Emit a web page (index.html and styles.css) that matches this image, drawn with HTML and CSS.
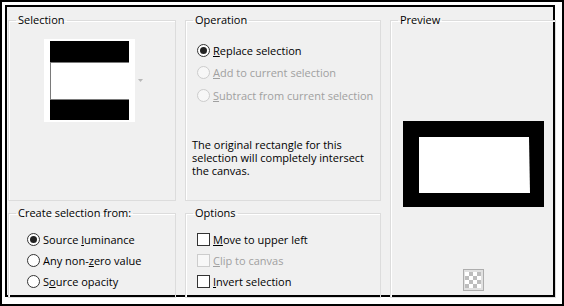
FILE: index.html
```html
<!DOCTYPE html>
<html>
<head>
<meta charset="utf-8">
<link rel="stylesheet" href="styles.css">
</head>
<body>
<div class="frame">
  <div class="dialog">
    <fieldset class="group g-sel">
      <legend>Selection</legend>
      <div class="thumb-row">
        <div class="thumb">
          <svg width="79" height="79" viewBox="0 0 79 79">
            <rect x="0" y="0" width="79" height="21" fill="#000"/>
            <rect x="0" y="21" width="79" height="38" fill="#fff"/>
            <rect x="0" y="59" width="79" height="20" fill="#000"/>
            <line x1="0.5" y1="21" x2="0.5" y2="59" stroke="#7a7a7a" stroke-width="1"/>
            <line x1="0" y1="21.5" x2="79" y2="21.5" stroke="#7a7a7a" stroke-width="1"/>
            <line x1="0" y1="58.5" x2="79" y2="58.5" stroke="#7a7a7a" stroke-width="1"/>
          </svg>
        </div>
        <svg class="drop" width="5" height="3" viewBox="0 0 5 3"><path d="M0 0H5L2.5 3Z" fill="#b8b8b8"/></svg>
      </div>
    </fieldset>

    <fieldset class="group g-op">
      <legend>Operation</legend>
      <div class="rows op-rows">
        <div class="row"><span class="radio on"></span><span class="lbl"><u>R</u>eplace selection</span></div>
        <div class="row dis"><span class="radio"></span><span class="lbl"><u>A</u>dd to current selection</span></div>
        <div class="row dis"><span class="radio"></span><span class="lbl"><u>S</u>ubtract from current selection</span></div>
      </div>
      <p class="desc">The original rectangle for this<br>selection will completely intersect<br>the canvas.</p>
    </fieldset>

    <fieldset class="group g-prev">
      <legend>Preview</legend>
      <div class="prev-body">
        <svg class="prev-img" width="141" height="86" viewBox="0 0 141 86">
          <rect x="0" y="0" width="141" height="86" fill="#000"/>
          <polygon points="16,16 126,16 127,72 16,72" fill="#fff"/>
        </svg>
        <div class="checker-btn">
          <div class="checker"></div>
        </div>
      </div>
    </fieldset>

    <fieldset class="group g-create">
      <legend>Create selection from:</legend>
      <div class="rows low-rows">
        <div class="row"><span class="radio on"></span><span class="lbl">Source <u>l</u>uminance</span></div>
        <div class="row"><span class="radio"></span><span class="lbl">Any non-<u>z</u>ero value</span></div>
        <div class="row"><span class="radio"></span><span class="lbl">S<u>o</u>urce opacity</span></div>
      </div>
    </fieldset>

    <fieldset class="group g-options">
      <legend>Options</legend>
      <div class="rows low-rows">
        <div class="row"><span class="check"></span><span class="lbl"><u>M</u>ove to upper left</span></div>
        <div class="row dis"><span class="check"></span><span class="lbl"><u>C</u>lip to canvas</span></div>
        <div class="row"><span class="check"></span><span class="lbl"><u>I</u>nvert selection</span></div>
      </div>
    </fieldset>
  </div>
</div>
</body>
</html>
```

FILE: styles.css
```css
* { box-sizing: border-box; }

html, body {
  margin: 0;
  padding: 0;
  background: #fff;
}

body {
  font-family: "Open Sans", "Noto Sans", sans-serif;
  font-size: 11px;
  color: #000;
}

.frame {
  width: 564px;
  height: 306px;
  border: 2px solid #000;
  padding: 3px;
  background: #fff;
}

.dialog {
  width: 550px;
  height: 292px;
  border: 2px solid #000;
  background: #f0f0f0;
  padding: 6px 0 0 1px;
  display: grid;
  grid-template-columns: 168px 196px 166px;
  grid-template-rows: 188px 92px;
  grid-template-areas:
    "sel op prev"
    "create options prev";
  column-gap: 9px;
  row-gap: 5px;
}

.group {
  margin: 0;
  padding: 0;
  min-width: 0;
  border: 1px solid #dcdcdc;
  box-shadow: inset 1px 1px 0 #fff;
}

.group legend {
  margin-left: 7px;
  padding: 0 2px;
  line-height: 14px;
  height: 14px;
  font-size: 11px;
}

.g-sel { grid-area: sel; }
.g-op { grid-area: op; }
.g-prev { grid-area: prev; }
.g-create { grid-area: create; }
.g-options { grid-area: options; }

.thumb-row {
  display: flex;
  align-items: center;
  margin: 12px 0 0 35px;
}

.thumb {
  width: 91px;
  height: 83px;
  background: #fff;
  padding: 2px 6px;
}

.thumb svg { display: block; }

.drop {
  display: block;
  margin-left: 3px;
}

.rows {
  display: flex;
  flex-direction: column;
}

.row {
  display: flex;
  align-items: center;
  gap: 3px;
  white-space: nowrap;
}

.op-rows {
  margin: 12px 0 0 11px;
}

.op-rows .row { height: 22.5px; }

.low-rows .row { height: 21px; }

.g-create .low-rows { margin: 9px 0 0 18px; }
.g-options .low-rows { margin: 9px 0 0 11px; }

.radio {
  width: 13px;
  height: 13px;
  border: 1px solid #333;
  border-radius: 50%;
  background: #fff;
  display: flex;
  align-items: center;
  justify-content: center;
  flex: none;
}

.radio.on::after {
  content: "";
  width: 7px;
  height: 7px;
  border-radius: 50%;
  background: #222;
}

.check {
  width: 13px;
  height: 13px;
  border: 1px solid #333;
  background: #fff;
  flex: none;
}

.row.dis .lbl { color: #a0a0a0; }
.row.dis .radio,
.row.dis .check {
  border-color: #cccccc;
  background: #f7f7f7;
}

.desc {
  margin: 31px 0 0 6px;
  line-height: 13px;
}

.prev-body {
  display: flex;
  flex-direction: column;
  align-items: center;
  padding-top: 94px;
}

.prev-img { display: block; }

.checker-btn {
  margin-top: 62px;
  width: 21px;
  height: 22px;
  border: 1px solid #adadad;
  background: #e1e1e1;
  display: flex;
  align-items: center;
  justify-content: center;
}

.checker {
  width: 16px;
  height: 16px;
  background-color: #fff;
  background-image:
    linear-gradient(45deg, #bdbdbd 25%, transparent 25%, transparent 75%, #bdbdbd 75%),
    linear-gradient(45deg, #bdbdbd 25%, transparent 25%, transparent 75%, #bdbdbd 75%);
  background-size: 8px 8px;
  background-position: 0 0, 4px 4px;
}
```
